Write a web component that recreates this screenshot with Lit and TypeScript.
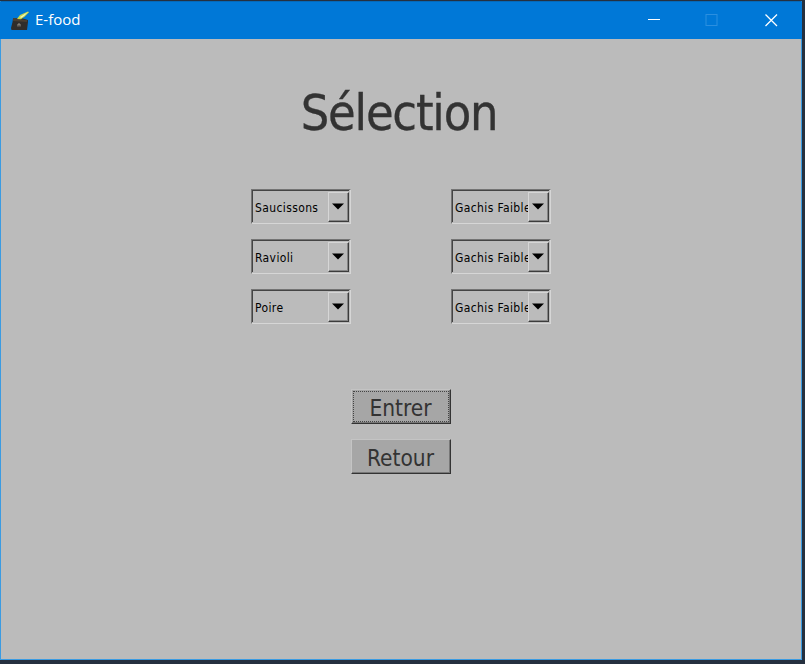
import { LitElement, html, css } from "lit";
import { customElement, property } from "lit/decorators.js";

@customElement("food-select")
class FoodSelect extends LitElement {
  @property() value = "";

  static styles = css`
    :host {
      display: flex;
      box-sizing: border-box;
      width: 100px;
      height: 35px;
      padding: 1px;
      border: 1px solid;
      border-color: #747474 #d6d6d6 #d6d6d6 #747474;
      background: #bbb;
    }
    .field {
      display: flex;
      flex: 1;
      min-width: 0;
      margin: -1px 0 0 -1px;
      border-top: 1px solid #444;
      border-left: 1px solid #444;
    }
    .value {
      flex: 1;
      min-width: 0;
      overflow: hidden;
      white-space: nowrap;
      padding-left: 2px;
      font: 12px/34px "DejaVu Sans Condensed", "DejaVu Sans", sans-serif;
      font-stretch: condensed;
      letter-spacing: 0.38px;
      color: #000;
    }
    .arrow {
      display: flex;
      box-sizing: border-box;
      width: 21px;
      height: 30px;
      margin-top: 1px;
      border: 1px solid;
      border-color: #d6d6d6 #3c3c3c #3c3c3c #d6d6d6;
      box-shadow: inset -1px -1px #858585;
      justify-content: center;
      padding: 10px 2px 0 0;
    }
    svg {
      flex: none;
      width: 12px;
      height: 7px;
    }
  `;

  render() {
    return html`<div class="field">
      <div class="value">${this.value}</div>
      <div class="arrow"><svg viewBox="0 0 12 7"><path d="M0 0.5h12L6 6.5z" /></svg></div>
    </div>`;
  }
}

@customElement("app-root")
class AppRoot extends LitElement {
  static styles = css`
    :host {
      display: block;
      box-sizing: border-box;
      width: 805px;
      height: 664px;
      padding-top: 1px;
      overflow: hidden;
      background: #25303f;
    }
    .window {
      display: flex;
      flex-direction: column;
      box-sizing: border-box;
      width: 802px;
      height: 659px;
      border: 1px solid #3a9be2;
      border-top-color: #0569b9;
      background: #bbb;
    }
    .titlebar {
      display: flex;
      align-items: center;
      flex: none;
      height: 37px;
      margin: 0 -1px;
      padding-left: 10px;
      background: #0078d7;
    }
    .logo {
      width: 20px;
      height: 20px;
      margin-top: 1px;
    }
    .name {
      flex: 1;
      padding: 0 0 2px 5px;
      font: 15px/35px "Open Sans", "Noto Sans", sans-serif;
      color: #fff;
    }
    .controls {
      display: flex;
      height: 37px;
      padding-right: 2px;
    }
    .controls svg {
      width: 58.5px;
      height: 37px;
      fill: none;
      stroke: #fff;
    }
    .controls .off {
      stroke: #2b8fe0;
    }
    .content {
      display: flex;
      flex-direction: column;
      align-items: center;
      padding: 43px 0 0 0;
    }
    h1 {
      margin: 0;
      padding-right: 4px;
      font: 50px/62px "DejaVu Sans Condensed", "DejaVu Sans", sans-serif;
      font-stretch: condensed;
      letter-spacing: -1.2px;
      -webkit-text-stroke: 0.3px #333;
      color: #333;
    }
    .choices {
      display: grid;
      grid-template-columns: 100px 100px;
      gap: 15px 100px;
      margin-top: 45px;
    }
    .actions {
      display: flex;
      flex-direction: column;
      gap: 15px;
      margin-top: 65px;
    }
    button {
      display: block;
      box-sizing: border-box;
      width: 100px;
      height: 35px;
      margin: 0;
      padding: 3px 1px 0 0;
      border: 1px solid;
      border-color: #c4c4c4 #333 #333 #c4c4c4;
      border-radius: 0;
      box-shadow: inset -1px -1px #777;
      background: #a6a6a6;
      font: 22.5px/30px "DejaVu Sans Condensed", "DejaVu Sans", sans-serif;
      font-stretch: condensed;
      letter-spacing: 0;
      color: #333;
    }
    .focused {
      outline: 1px dotted #444;
      outline-offset: -3px;
    }
  `;

  private rows = ["Saucissons", "Ravioli", "Poire"];

  render() {
    return html`<div class="window">
      <div class="titlebar">
        <svg class="logo" viewBox="0 0 20 20">
          <path d="M3 7.5L11 7l7 2v2l-1 8H1.500L1 17l1.500-6z" fill="#302d2b" />
          <path d="M3 7l8 1 6 1v2L3 10z" fill="#4a3e30" />
          <path d="M7 8L10 4l8-3.5 1 .7-4 4-4 3z" fill="#c9d84a" />
          <path d="M10 6l8-5-4 4-3 2z" fill="#f2f7c2" />
          <path d="M8 15.5v-2.5h2v2.5" fill="none" stroke="#b2aaa0" stroke-width=".8" />
        </svg>
        <div class="name">E-food</div>
        <div class="controls">
          <svg viewBox="0 0 58.5 37"><path d="M23 17.500h12" /></svg>
          <svg class="off" viewBox="0 0 58.5 37"><rect x="23" y="12.5" width="11" height="11" /></svg>
          <svg viewBox="0 0 58.5 37"><path d="M23.5 12.5l11.5 11.5M35 12.5L23.5 24" stroke-width="1.3" /></svg>
        </div>
      </div>
      <div class="content">
        <h1>Sélection</h1>
        <div class="choices">
          ${this.rows.map(
            (food) => html`<food-select .value=${food}></food-select>
              <food-select .value=${"Gachis Faible"}></food-select>`
          )}
        </div>
        <div class="actions">
          <button class="focused">Entrer</button>
          <button>Retour</button>
        </div>
      </div>
    </div>`;
  }
}
